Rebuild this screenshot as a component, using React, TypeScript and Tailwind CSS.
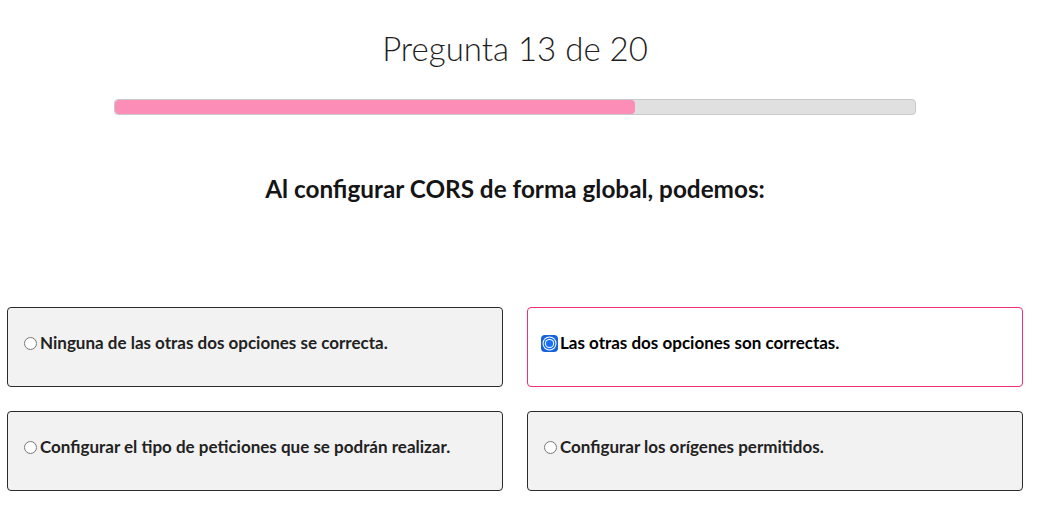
const options = [
  { text: 'Ninguna de las otras dos opciones se correcta.', selected: false },
  { text: 'Las otras dos opciones son correctas.', selected: true },
  { text: 'Configurar el tipo de peticiones que se podrán realizar.', selected: false },
  { text: 'Configurar los orígenes permitidos.', selected: false },
]

function CheckedRadio() {
  return (
    <svg width="17" height="17" viewBox="0 0 17 17" className="mr-[2px] shrink-0">
      <rect x="0" y="0" width="17" height="17" rx="4" fill="#1663d6" />
      <circle cx="8.5" cy="8.5" r="7" fill="#ffffff" />
      <circle cx="8.5" cy="8.5" r="6" fill="#1a6ff0" />
      <circle cx="8.5" cy="8.5" r="4.6" fill="#ffffff" />
      <circle cx="8.5" cy="8.5" r="3.6" fill="#1a6ff0" />
    </svg>
  )
}

export default function App() {
  const current = 13
  const total = 20

  return (
    <div className="min-h-screen bg-white pl-[7px] pr-[15px] text-[#222]" style={{ fontFamily: 'Lato, "Liberation Sans", sans-serif' }}>
      {/* cabecera */}
      <div className="pt-[28px] flex flex-col items-center">
        <h1 className="text-[33px] leading-[40px] font-light text-[#1e1e1e]">
          Pregunta {current} de {total}
        </h1>
        <div className="mt-[31px] w-[802px] h-[16px] rounded-[4px] border border-[#c9c9c9] bg-[#e0e0e0] overflow-hidden">
          <div className="h-full bg-[#fc8db7] rounded-[4px]" style={{ width: `${(current / total) * 100}%` }} />
        </div>
        <h2 className="mt-[59px] text-[24.3px] leading-[30px] font-bold text-[#151515]">
          Al configurar CORS de forma global, podemos:
        </h2>
      </div>

      {/* opciones */}
      <div className="mt-[103px] grid grid-cols-2 gap-x-[24px] gap-y-[24px]">
        {options.map((opt) => (
          <label
            key={opt.text}
            className={
              opt.selected
                ? 'h-[80px] rounded-[4px] border border-[#f0306f] bg-white pl-[13px] pt-[23px] flex items-start'
                : 'h-[80px] rounded-[4px] border border-[#2b2b2b] bg-[#f2f2f2] pl-[16px] pt-[23px] flex items-start'
            }
          >
            <span className="h-[24px] flex items-center">
              {opt.selected ? (
                <CheckedRadio />
              ) : (
                <input type="radio" name="q13" className="m-0 mr-[3px] w-[13px] h-[13px]" />
              )}
            </span>
            <span className={opt.selected ? 'text-[17px] leading-[24px] font-bold text-black' : 'text-[17px] leading-[24px] font-bold text-[#222]'}>
              {opt.text}
            </span>
          </label>
        ))}
      </div>
    </div>
  )
}
